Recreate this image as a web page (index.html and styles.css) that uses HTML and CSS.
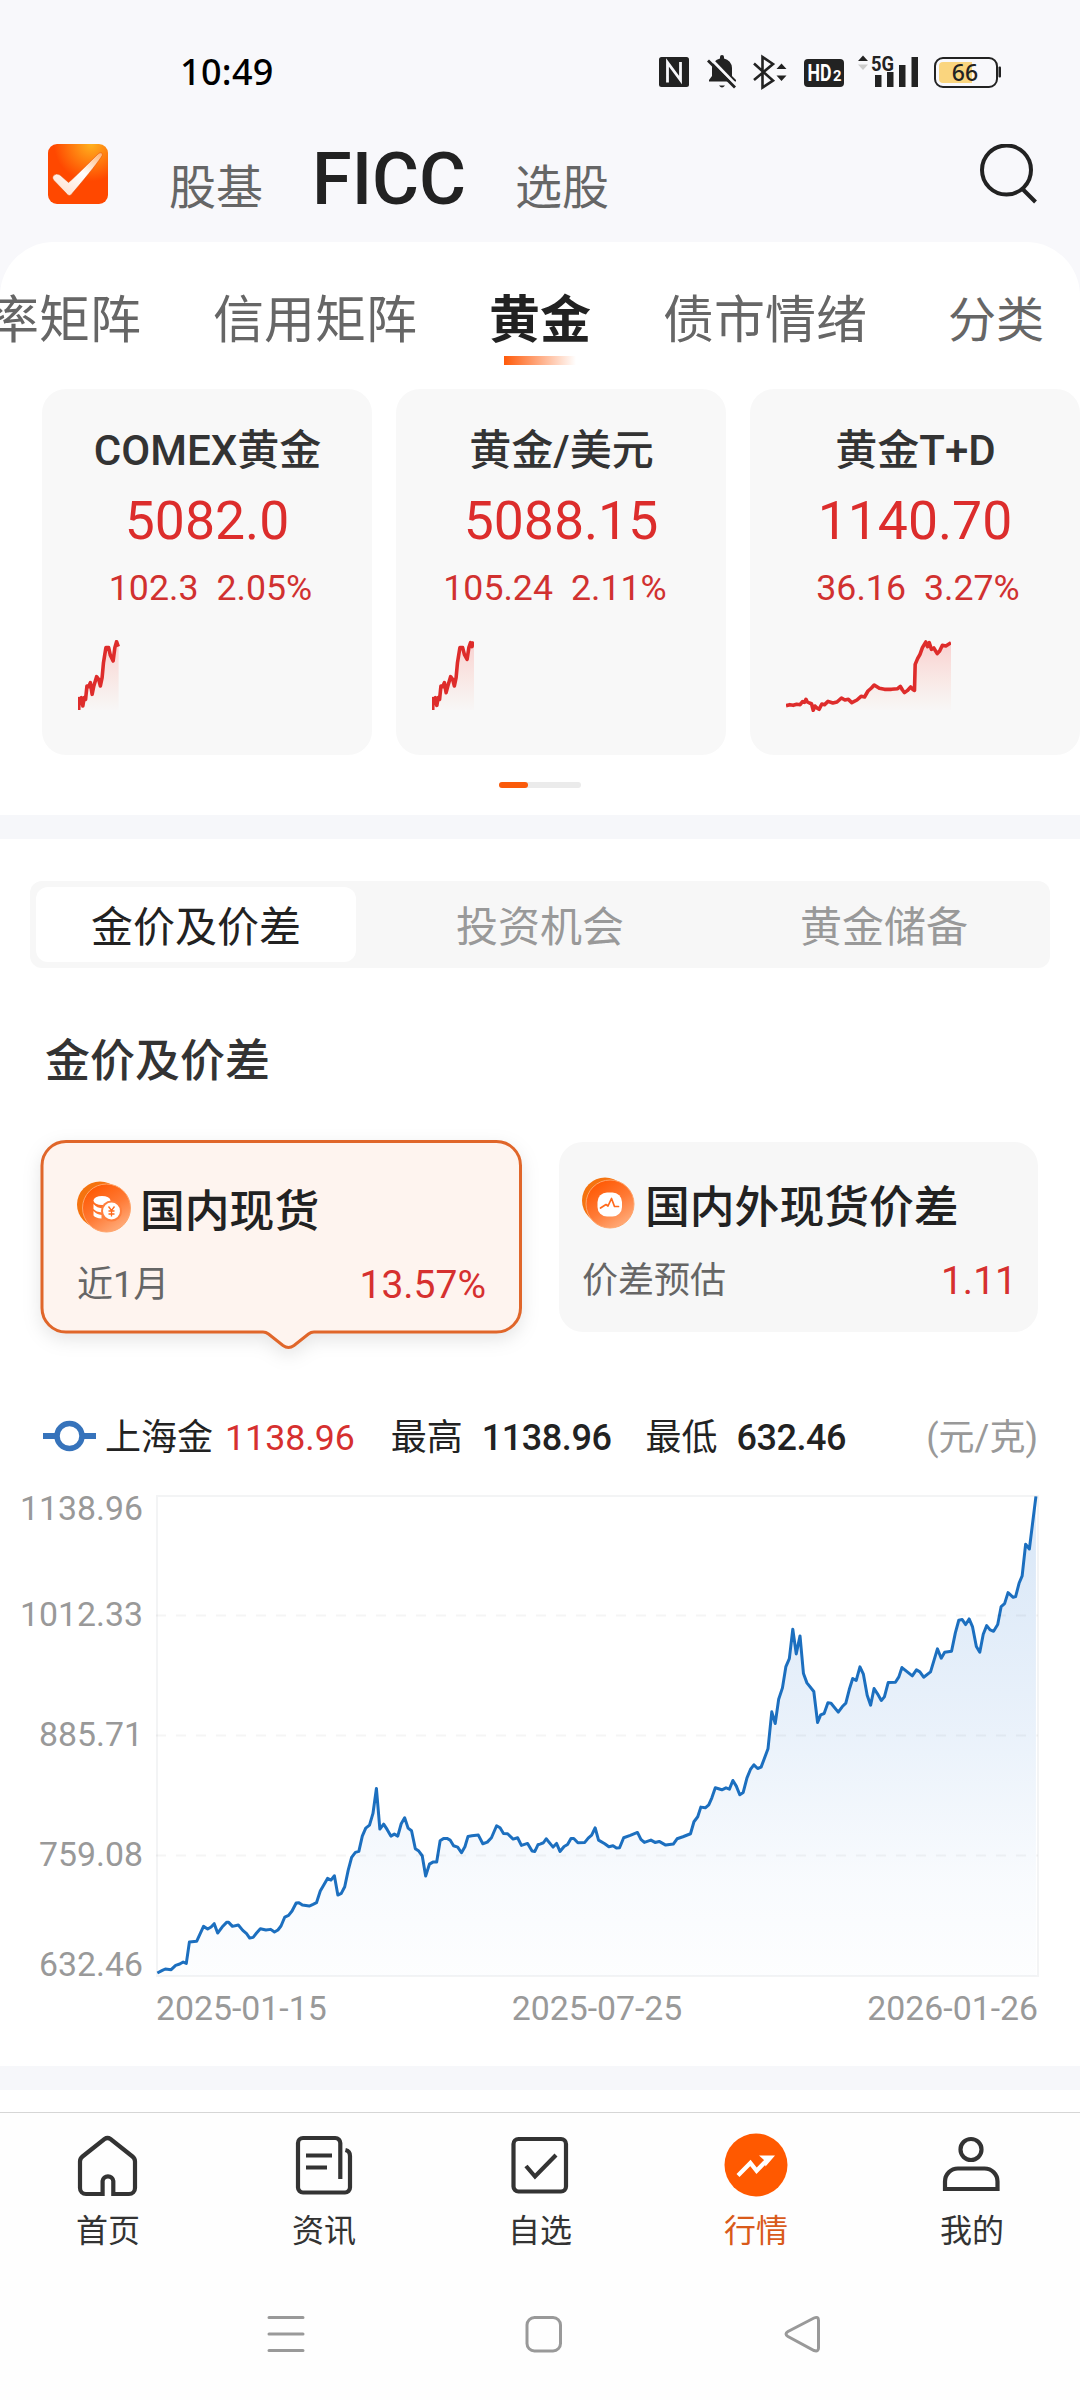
FILE: index.html
```html
<!DOCTYPE html>
<html lang="zh-CN">
<head>
<meta charset="utf-8">
<title>FICC 黄金</title>
<link rel="stylesheet" href="styles.css">
</head>
<body>
<div class="status-bar">
  <span class="clock">10:49</span>
  <svg class="status-icons" width="346" height="36" viewBox="657 54 346 36">
    <rect x="659" y="57" width="30" height="30" rx="2.5" fill="#222"/>
    <path d="M667.500 82.500V62.500L680.500 80V62" fill="none" stroke="#f8f8fb" stroke-width="2.800"/>
    <path d="M709 81.500v-1.500l3-4V68a10 10 0 0 1 8-9.500V57a2 2 0 0 1 4 0v1.500a10 10 0 0 1 8 9.500v8l4 4v1.500z" fill="#222"/>
    <path d="M707 84h28" stroke="#f8f8fb" stroke-width="1"/>
    <path d="M719 85.500h6q-3 4-6 0z" fill="#222"/>
    <path d="M711 59l27 28" stroke="#f8f8fb" stroke-width="3"/>
    <path d="M708 60.500l27 27" stroke="#222" stroke-width="2.800"/>
    <path d="M754 63.500l19 17-10.500 7V57l10.500 7-19 16" fill="none" stroke="#222" stroke-width="2.600"/>
    <path d="M776.500 69l5-5.500 5 5.500zM776.500 75.500h10l-5 5.500z" fill="#222"/>
    <rect x="804" y="59" width="40" height="28" rx="4" fill="#222"/>
    <text x="807.500" y="80.500" class="hd-mark" textLength="24" lengthAdjust="spacingAndGlyphs">HD</text>
    <text x="833" y="81" class="hd-sub" textLength="8.500" lengthAdjust="spacingAndGlyphs">2</text>
    <path d="M858 61l5-5.500 5 5.500z" fill="#222"/>
    <path d="M858 64.500h10l-5 5.500z" fill="#ccc"/>
    <text x="871" y="71" class="net-mark" textLength="23" lengthAdjust="spacingAndGlyphs">5G</text>
    <path d="M875 75h6.500v12H875zM887 72h6.500v15H887zM899 65h6.500v22H899zM911.500 57h6.500v30h-6.500z" fill="#222"/>
    <rect x="935" y="58" width="62" height="29" rx="8" fill="none" stroke="#222" stroke-width="2"/>
    <path d="M943 62h29v21h-29q-4 0-4-4V66q0-4 4-4z" fill="#fad57e"/>
    <rect x="998.500" y="66.500" width="2.500" height="11" rx="1" fill="#222"/>
    <text x="965" y="80.500" class="battery-mark">66</text>
  </svg>
</div>

<header class="header">
  <svg class="logo" width="60" height="60" viewBox="0 0 60 60">
    <defs>
      <radialGradient id="logoBg" cx=".72" cy="0" r=".62"><stop offset="0" stop-color="#ffb21e"/><stop offset="1" stop-color="#ff4800"/></radialGradient>
      <linearGradient id="logoTick" x1=".9" y1="0" x2=".2" y2="1"><stop offset="0" stop-color="#ffb87c"/><stop offset=".45" stop-color="#fff"/><stop offset="1" stop-color="#ffe0d0"/></linearGradient>
    </defs>
    <rect width="60" height="60" rx="9" fill="url(#logoBg)"/>
    <path d="M5 32Q8 28.500 12 31L20.500 38.500Q24 36 50 10Q54 7 54.500 11Q50 19 24.500 49Q21.500 54 18 49L5.500 36Q4 34 5 32z" fill="url(#logoTick)" stroke="#e04800" stroke-width=".5"/>
  </svg>
  <nav class="main-nav">
    <span class="nav-item">股基</span>
    <span class="nav-item nav-item--active">FICC</span>
    <span class="nav-item">选股</span>
  </nav>
  <svg class="search" width="60" height="62" viewBox="0 0 60 62" fill="none" stroke="#222" stroke-width="4">
    <circle cx="28.500" cy="26" r="24.500"/>
    <path d="M44 44.500L57.500 58"/>
  </svg>
</header>

<main class="sheet">
  <nav class="sub-tabs">
    <span class="sub-tab">率矩阵</span>
    <span class="sub-tab">信用矩阵</span>
    <span class="sub-tab sub-tab--active">黄金</span>
    <span class="sub-tab">债市情绪</span>
    <span class="sub-tab sub-tab--last">分类</span>
  </nav>

  <section class="quotes">
    <article class="quote">
      <h3 class="quote-name">COMEX黄金</h3>
      <p class="quote-price">5082.0</p>
      <p class="quote-change quote-change--a"><span>102.3</span><span>2.05%</span></p>
      <svg class="spark" width="42" height="72" viewBox="226 812 122 216" preserveAspectRatio="none">
        <defs><linearGradient id="sparkFill" x1="0" y1="0" x2="0" y2="1"><stop offset="0" stop-color="#f33" stop-opacity=".2"/><stop offset="1" stop-color="#f63" stop-opacity=".01"/></linearGradient></defs>
        <path fill="url(#sparkFill)" d="M228 1020L234 1000 244 985 252 950 262 940 267 975 280 922 291 950 300 880 307 835 315 835 328 875 338 817 344 830V1022H228z"/>
        <polyline class="spark-line" points="228,1022 229,988 233,1002 236,985 240,1010 244,985 248,990 252,950 257,952 262,940 267,975 272,950 280,922 286,930 291,950 296,925 300,880 307,835 315,835 320,858 328,875 333,835 338,817 343,832"/>
      </svg>
    </article>
    <article class="quote">
      <h3 class="quote-name">黄金/美元</h3>
      <p class="quote-price">5088.15</p>
      <p class="quote-change quote-change--b"><span>105.24</span><span>2.11%</span></p>
      <svg class="spark" width="42" height="72" viewBox="226 812 122 216" preserveAspectRatio="none">
        <path fill="url(#sparkFill)" d="M228 1020L234 1000 244 985 252 950 262 940 267 970 280 922 291 950 300 880 307 835 315 835 328 870 338 825 348 817V1022H228z"/>
        <polyline class="spark-line" points="228,1022 229,988 233,1002 236,985 240,1008 244,985 248,990 252,950 257,952 262,940 267,970 272,950 280,922 286,930 291,950 296,925 300,880 307,835 315,835 320,855 328,870 333,835 338,820 342,832 347,817"/>
      </svg>
    </article>
    <article class="quote">
      <h3 class="quote-name">黄金T+D</h3>
      <p class="quote-price">1140.70</p>
      <p class="quote-change quote-change--c"><span>36.16</span><span>3.27%</span></p>
      <svg class="spark" width="165" height="72" viewBox="714 812 479 216" preserveAspectRatio="none">
        <path fill="url(#sparkFill)" d="M714 1009L772 990 793 1023 818 1004 875 986 905 1000 942 983 970 947 1000 960 1046 951 1058 970 1076 953 1085 962 1089 885 1120 818 1153 853 1168 830 1193 820V1022H714z"/>
        <polyline class="spark-line" points="714,1009 725,1006 735,1008 745,1005 755,1006 762,997 768,999 772,990 776,998 782,1001 788,1003 793,1023 798,1010 804,1016 810,1020 818,1004 826,1006 836,996 850,1001 862,998 875,986 885,992 895,990 905,1000 920,992 932,981 942,983 952,965 962,956 970,947 985,957 1000,960 1020,960 1038,958 1046,951 1052,962 1058,970 1066,964 1076,953 1082,960 1087,963 1089,885 1096,868 1103,855 1110,835 1120,818 1125,832 1130,820 1136,840 1143,836 1153,853 1160,845 1168,828 1178,830 1193,820"/>
      </svg>
    </article>
  </section>
  <div class="pager"><span class="pager-thumb"></span></div>
  <div class="band"></div>

  <div class="segment">
    <span class="segment-item segment-item--active">金价及价差</span>
    <span class="segment-item">投资机会</span>
    <span class="segment-item">黄金储备</span>
  </div>

  <h2 class="section-title">金价及价差</h2>

  <section class="metrics">
    <article class="metric metric--active">
      <svg class="metric-frame" width="482" height="212" viewBox="0 0 482 212">
        <path d="M26 1.500H456.500a24 24 0 0 1 24 24V168a24 24 0 0 1-24 24H274q-3 0-5.500 2L254 205.500q-5.500 4-11 0L228.500 194q-2.500-2-5.500-2H26a24 24 0 0 1-24-24V25.500a24 24 0 0 1 24-24z" fill="#fef4ef" stroke="#e0662a" stroke-width="3"/>
      </svg>
      <div class="metric-head">
        <svg width="56" height="54" viewBox="0 0 56 54">
          <defs>
            <linearGradient id="coinFront" x1=".25" y1=".1" x2=".8" y2=".95"><stop offset="0" stop-color="#ff5c08"/><stop offset=".5" stop-color="#ff7a35"/><stop offset="1" stop-color="#ffad7c"/></linearGradient>
          </defs>
          <circle cx="23" cy="23.500" r="23" fill="#f5730f"/>
          <circle cx="29.500" cy="27" r="24" fill="url(#coinFront)" stroke="#ffa56b" stroke-width="1"/>
          <ellipse cx="25" cy="19.500" rx="8.500" ry="4.500" fill="#fff"/>
          <path d="M16.500 23q3 4 10 4.500l-1.500 4q-6-.5-8.500-3.500zM16.500 30q3 3.500 8 4v3.500q-6-.5-8-3z" fill="#fff"/>
          <circle cx="34.500" cy="30" r="10.500" fill="#ff7f3d"/>
          <circle cx="34.500" cy="30" r="8.500" fill="#fff"/>
          <path d="M31.500 25.500l3 4 3-4M34.500 29.500v6M31.500 30h6M31.500 33h6" fill="none" stroke="#ff6a1c" stroke-width="1.300"/>
        </svg>
        <span class="metric-name">国内现货</span>
      </div>
      <div class="metric-foot"><span class="metric-label">近1月</span><span class="metric-value">13.57%</span></div>
    </article>
    <article class="metric">
      <div class="metric-head">
        <svg width="56" height="54" viewBox="0 0 56 54">
          <circle cx="23" cy="23.500" r="23" fill="#f5730f"/>
          <circle cx="28" cy="27" r="24" fill="url(#coinFront)" stroke="#ffa56b" stroke-width="1"/>
          <rect x="15.500" y="15.500" width="24.500" height="24" rx="9.500" fill="#fff"/>
          <path d="M18.500 31l5.500-3.500 2 1.500 3.500-7.500 3 8h4" fill="none" stroke="#ff6a1c" stroke-width="1.700" stroke-linecap="round" stroke-linejoin="round"/>
        </svg>
        <span class="metric-name">国内外现货价差</span>
      </div>
      <div class="metric-foot"><span class="metric-label">价差预估</span><span class="metric-value">1.11</span></div>
    </article>
  </section>

  <div class="legend">
    <svg width="54" height="32" viewBox="0 0 54 32" fill="none" stroke="#3673bb">
      <path d="M0 16h13M40 16h13" stroke-width="6"/>
      <circle cx="26.500" cy="16" r="12.500" stroke-width="5.500"/>
    </svg>
    <span class="legend-name">上海金</span>
    <span class="legend-now">1138.96</span>
    <span class="legend-high">最高</span>
    <b class="legend-num">1138.96</b>
    <span class="legend-low">最低</span>
    <b class="legend-num">632.46</b>
    <span class="legend-unit">(元/克)</span>
  </div>

  <section class="chart">
    <div class="y-axis"><span>1138.96</span><span>1012.33</span><span>885.71</span><span>759.08</span><span>632.46</span></div>
    <svg class="plot" width="883" height="482" viewBox="0 0 883 482">
      <defs><linearGradient id="areaFill" x1="0" y1="0" x2="0" y2="1"><stop offset="0" stop-color="#1a6fd0" stop-opacity=".17"/><stop offset=".5" stop-color="#1a6fd0" stop-opacity=".09"/><stop offset=".8" stop-color="#1a6fd0" stop-opacity=".03"/><stop offset="1" stop-color="#1a6fd0" stop-opacity=".01"/></linearGradient></defs>
      <rect x="1" y="1" width="881" height="480" fill="none" stroke="#f3f4f5" stroke-width="2"/>
      <svg x="0" y="1" width="882" height="480" viewBox="453 -613 2561 1441" preserveAspectRatio="none" overflow="visible">
        <path id="area" fill="url(#areaFill)" d=""/>
        <polyline id="price" class="price-line" points="457,819 470,812 480,807 497,809 510,796 522,792 532,786 541,790 550,726 571,724 591,679 603,687 613,681 622,671 632,699 645,681 658,667 664,667 675,679 692,675 705,691 716,701 725,714 735,712 745,699 756,686 772,690 786,688 797,696 807,690 816,678 827,651 838,646 848,633 860,609 868,608 878,615 898,618 909,613 919,608 930,573 941,553 951,535 961,540 971,527 981,585 991,580 1001,560 1011,511 1021,472 1032,457 1042,454 1052,408 1062,384 1073,375 1083,340 1093,265 1103,387 1114,372 1124,388 1135,408 1145,402 1155,408 1165,371 1175,353 1185,384 1195,392 1206,446 1216,453 1226,467 1236,528 1247,492 1257,486 1268,486 1278,422 1288,415 1298,415 1307,420 1317,437 1329,441 1340,458 1350,440 1359,409 1370,407 1389,405 1402,431 1415,426 1427,413 1442,377 1452,383 1462,400 1474,401 1490,417 1503,413 1514,436 1532,430 1545,453 1553,454 1562,434 1568,432 1578,428 1586,416 1606,441 1616,430 1626,454 1638,439 1648,433 1658,415 1666,415 1678,428 1698,427 1708,414 1718,405 1728,383 1738,420 1756,431 1768,440 1780,437 1790,444 1799,443 1811,413 1830,406 1851,397 1861,418 1871,427 1890,420 1902,427 1914,424 1933,435 1955,432 1966,416 1983,410 2005,401 2015,365 2026,350 2035,321 2048,323 2058,314 2067,293 2077,263 2096,269 2108,263 2118,267 2128,241 2138,258 2148,284 2158,277 2169,233 2179,208 2189,194 2200,205 2210,201 2230,146 2241,35 2251,70 2261,-3 2272,-37 2282,-101 2292,-125 2302,-213 2312,-139 2323,-193 2333,-80 2343,-52 2363,-26 2374,67 2383,44 2393,40 2404,8 2413,9 2434,36 2446,19 2456,9 2466,-32 2476,-65 2486,-59 2497,-100 2507,-78 2518,-15 2528,15 2538,-35 2548,-19 2559,1 2568,-10 2579,-53 2600,-54 2610,-70 2619,-98 2649,-73 2661,-91 2671,-85 2682,-69 2702,-85 2722,-154 2733,-126 2743,-144 2763,-147 2774,-202 2784,-240 2794,-242 2804,-227 2814,-244 2824,-220 2835,-161 2845,-144 2855,-198 2865,-224 2875,-211 2885,-207 2897,-227 2907,-281 2917,-290 2927,-323 2942,-309 2949,-311 2959,-351 2968,-373 2978,-468 2989,-454 3008,-612"/>
      </svg>
      <path d="M0 120.500H882M0 240.500H882M0 360.500H882" fill="none" stroke="#000" stroke-opacity=".04" stroke-width="2" stroke-dasharray="10 10"/>
    </svg>
  </section>
  <div class="x-axis"><span>2025-01-15</span><span>2025-07-25</span><span>2026-01-26</span></div>
  <div class="band"></div>
</main>

<nav class="tab-bar">
  <div class="tab">
    <svg class="tab-icon" viewBox="0 0 64 64"><path d="M26.600 63V48a5.400 5.400 0 0 1 10.700 0V61H53a6 6 0 0 0 6-6V28.500q0-3-2.500-5L34.500 6q-3-2-6 0L6.500 23.500Q4 25.500 4 28.500V55a6 6 0 0 0 6 6H26.600"/></svg>
    <span>首页</span>
  </div>
  <div class="tab">
    <svg class="tab-icon" viewBox="0 0 64 64"><path d="M48.300 46V10a5 5 0 0 0-5-5H11a5 5 0 0 0-5 5V54.500a5 5 0 0 0 5 5H53a5 5 0 0 0 5-5V23q0-5-4.600-6M14 22.500H40M14 34.500H35"/></svg>
    <span>资讯</span>
  </div>
  <div class="tab">
    <svg class="tab-icon" viewBox="0 0 64 64"><rect x="5.500" y="6" width="52.500" height="52.500" rx="5"/><path d="M18 33l9 10.500L48 22"/></svg>
    <span>自选</span>
  </div>
  <div class="tab tab--active">
    <svg class="tab-icon" viewBox="0 0 64 64"><circle cx="32" cy="32" r="31.500" fill="#ff5900" stroke="none"/><path d="M14 42.500L26.400 30 32.600 37.800 44 26" stroke="#fff"/><path d="M35 22.500H51L41.500 33.500 40 27z" fill="#fff" stroke="none"/></svg>
    <span>行情</span>
  </div>
  <div class="tab">
    <svg class="tab-icon" viewBox="0 0 64 64"><circle cx="31" cy="16.500" r="10.500"/><path d="M5 56V48.500a13 13 0 0 1 13-13H44.500a13 13 0 0 1 13 13V56z"/></svg>
    <span>我的</span>
  </div>
</nav>

<div class="sys-nav">
  <svg width="40" height="40" viewBox="0 0 40 40"><path d="M3 3.500H37M3 20H37M3 36.500H37"/></svg>
  <svg width="40" height="40" viewBox="0 0 40 40"><rect x="3" y="3.500" width="33.500" height="33.500" rx="7.500"/></svg>
  <svg width="40" height="40" viewBox="0 0 40 40"><path d="M32 4L6 17.500q-4 2.500 0 5L32 36.500q4.500 1.500 4.500-2.500V6.500Q36.500 2 32 4z"/></svg>
</div>
<script src="chart.js"></script>
</body>
</html>
```
FILE: chart.js
```js
// Close the price line down to the baseline to shade the area below it.
const line = document.getElementById('price').getAttribute('points');
document.getElementById('area').setAttribute('d', 'M' + line + ' L3008,828 457,828Z');
```
FILE: styles.css
```css
* { box-sizing: border-box; margin: 0; padding: 0; }
body {
  width: 1080px;
  height: 2400px;
  overflow: hidden;
  background: #f8f8fb;
  color: #222;
  font-family: Roboto, "Noto Sans CJK SC", sans-serif;
}
svg { display: block; flex: none; }
span, b, p { white-space: nowrap; }

.status-bar {
  display: flex;
  align-items: center;
  justify-content: space-between;
  height: 144px;
  padding: 0 77px 0 180px;
}
.clock { font: 500 36px/40px "Noto Sans", sans-serif; color: #000; letter-spacing: .3px; }
.hd-mark { font: 700 23px Roboto, sans-serif; fill: #fff; }
.hd-sub { font: 700 14px Roboto, sans-serif; fill: #fff; }
.net-mark { font: 700 20px Roboto, sans-serif; fill: #222; }
.battery-mark { font: 500 23px "Noto Sans", sans-serif; fill: #222; text-anchor: middle; }

.header { display: flex; height: 98px; padding: 0 42px 0 48px; }
.main-nav { display: flex; align-items: baseline; gap: 49px; margin-left: 61px; height: 72px; }
.nav-item { font-size: 47px; line-height: 72px; color: #666; }
.nav-item--active { font-size: 72px; font-weight: 500; color: #222; }
.search { margin-left: auto; }

.sheet { background: #fff; border-radius: 54px 54px 0 0; height: 1870px; overflow: hidden; }
.sub-tabs { display: flex; gap: 72px; height: 147px; padding-top: 54px; margin-left: -12px; }
.sub-tab { font-size: 51px; line-height: 50px; color: #666; flex: none; }
.sub-tab--active { color: #222; font-weight: 700; }
.sub-tab--last { margin-left: 9px; font-size: 48px; }
.sub-tab--active::after {
  content: "";
  display: block;
  width: 72px;
  height: 9px;
  margin: 10px auto 0;
  background: linear-gradient(90deg, #ff5a0a, rgba(255, 90, 10, 0));
}

.quotes { display: flex; gap: 24px; padding-left: 42px; }
.quote { flex: none; width: 330px; height: 366px; padding-top: 32px; border-radius: 24px; background: #f8f8f8; }
.quote-name { padding-left: 1px; font-size: 42px; line-height: 60px; font-weight: 500; color: #333; text-align: center; }
.quote-price { margin-top: 7px; font-size: 53.5px; line-height: 66px; color: #dc2d2c; text-align: center; }
.quote-change { display: flex; justify-content: center; gap: 18px; margin-top: 12px; font-size: 35.7px; line-height: 44px; color: #d13130; }
.quote-change--a { padding-left: 7px; }
.quote-change--b { padding-right: 12px; }
.quote-change--c { padding-left: 6px; }
.spark { margin: 30px 0 0 36px; }
.spark-line { fill: none; stroke: #de2c2b; stroke-width: 3.6; stroke-linejoin: round; vector-effect: non-scaling-stroke; }

.pager { width: 82px; height: 6px; margin: 27px auto; border-radius: 3px; background: #ebebeb; }
.pager-thumb { display: block; width: 29px; height: 6px; border-radius: 3px; background: #fa5a0a; }
.band { height: 24px; background: #f6f7fa; }

.segment { display: flex; justify-content: space-between; height: 87px; margin: 42px 30px 0; padding: 6px; border-radius: 12px; background: #f7f7f7; }
.segment-item { width: 320px; border-radius: 12px; font-size: 42px; line-height: 82px; height: 75px; text-align: center; color: #999; }
.segment-item--active { background: #fff; color: #222; }

.section-title { margin: 64px 0 0 45px; font-size: 45px; line-height: 60px; font-weight: 500; color: #333; }

.metrics { display: flex; align-items: flex-start; gap: 37px; margin: 48px 0 0 40px; height: 193px; }
.metric { position: relative; width: 479px; height: 190px; margin-top: 2px; padding: 35px 21px 0 23px; border-radius: 24px; background: #f7f7f7; }
.metric--active { width: 482px; height: 193px; margin-top: 0; padding: 41px 36px 0 37px; background: none; }
.metric-frame { position: absolute; left: 0; top: 0; filter: drop-shadow(0 6px 9px rgba(0, 0, 0, .1)); }
.metric-head, .metric-foot { position: relative; display: flex; }
.metric-head { height: 60px; gap: 7px; }
.metric-name { font-size: 44.8px; line-height: 62px; font-weight: 500; }
.metric-foot { justify-content: space-between; margin-top: 20px; line-height: 48px; }
.metric-label { font-size: 36px; color: #666; }
.metric-value { font-size: 39px; color: #d6302f; }

.legend { display: flex; align-items: center; margin: 83px 42px 0 43px; height: 44px; font-size: 36px; line-height: 44px; }
.legend svg { margin-top: -4px; }
.legend-name { margin-left: 8px; }
.legend-now { margin-left: 12px; font-size: 35.7px; color: #d6302f; }
.legend-high { margin-left: 36px; }
.legend-low { margin-left: 34px; }
.legend-num { margin-left: 19px; font-weight: 500; font-size: 36px; letter-spacing: -.45px; }
.legend-unit { margin-left: auto; color: #999; }

.chart { display: flex; justify-content: space-between; height: 481px; margin-top: 35px; padding-right: 41px; }
.y-axis { display: flex; flex-direction: column; width: 143px; padding-top: 2px; text-align: right; font-size: 33.8px; line-height: 24px; color: #999; }
.y-axis span:nth-child(2) { margin-top: 82px; }
.y-axis span:nth-child(3), .y-axis span:nth-child(4) { margin-top: 96px; }
.y-axis span:nth-child(5) { margin-top: 86px; }
.price-line { fill: none; stroke: #1c6fbf; stroke-width: 3; stroke-linejoin: round; vector-effect: non-scaling-stroke; }
.x-axis { display: flex; justify-content: space-between; margin: 13px 42px 37px 156px; font-size: 33.8px; line-height: 40px; color: #999; }

.tab-bar { display: flex; height: 156px; border-top: 1px solid #d6d6d6; background: #fefefe; }
.tab { display: flex; flex: 1; flex-direction: column; align-items: center; gap: 14px; padding-top: 20px; font-size: 32px; line-height: 40px; color: #333; }
.tab--active { color: #d95a1a; }
.tab-icon { width: 64px; height: 64px; fill: none; stroke: #333; stroke-width: 4.2; }
.sys-nav { display: flex; align-items: center; gap: 218px; height: 132px; padding-left: 266px; background: #fefefe; }
.sys-nav svg { fill: none; stroke: #999; stroke-width: 3; stroke-linecap: round; }
```
